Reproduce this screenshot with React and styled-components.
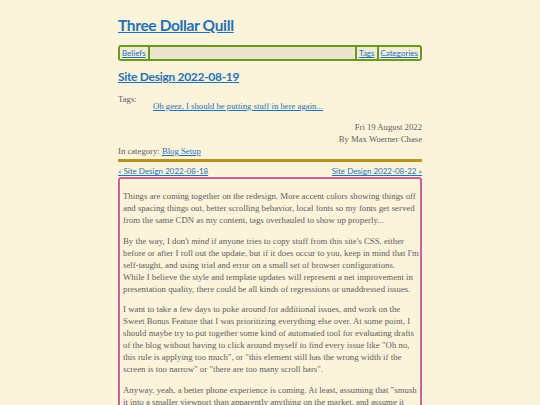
import React from "react";
import styled, { createGlobalStyle } from "styled-components";

const GlobalStyle = createGlobalStyle`
  html, body {
    margin: 0;
    padding: 0;
    background: #fcf3db;
  }
  body {
    font-family: "Liberation Serif", serif;
    color: #5e5e5e;
  }
`;

const Page = styled.div`
  width: 304px;
  margin: 0 auto;
  padding-top: 14px;
`;

const SiteTitle = styled.h1`
  margin: 0;
  font-family: "Lato", "Open Sans", sans-serif;
  font-weight: 700;
  font-size: 15.5px;
  letter-spacing: -0.35px;
  line-height: 22px;

  a {
    color: #1f72b8;
  }
`;

const Nav = styled.nav`
  margin-top: 9px;
  height: 12px;
  border: 2px solid #6a9a1c;
  border-radius: 3px;
  background: #ebe5d0;
  display: flex;
  align-items: stretch;
  font-family: "Lato", "Open Sans", sans-serif;
  font-size: 8px;
  line-height: 12px;
`;

const NavLink = styled.a`
  color: #1f72b8;
  padding: 0 2px;
  background: #f3ecd6;
`;

const NavBar = styled.span`
  width: 2px;
  background: #6a9a1c;
`;

const NavFill = styled.span`
  flex: 1;
`;

const PostTitle = styled.h2`
  margin: 8px 0 0;
  font-family: "Liberation Sans Narrow", "Lato", sans-serif;
  font-weight: 700;
  font-size: 12px;
  letter-spacing: -0.3px;
  line-height: 16px;

  a {
    color: #1f72b8;
  }
`;

const Small = styled.div`
  font-size: 8.7px;
  line-height: 12px;
  height: ${p => (p.$h ? `${p.$h}px` : "auto")};
  text-align: ${p => (p.$right ? "right" : "left")};
  padding-left: ${p => p.$indent || 0}px;
  margin-top: ${p => p.$top || 0}px;

  a {
    color: #1f72b8;
  }
`;

const Rule = styled.hr`
  margin: 2px 0 0;
  border: none;
  height: 3px;
  background: #bb9120;
`;

const PrevNext = styled.div`
  margin-top: 4px;
  display: flex;
  justify-content: space-between;
  font-family: "Lato", "Open Sans", sans-serif;
  font-size: 8px;
  line-height: 10px;

  a {
    color: #1f72b8;
  }
`;

const Article = styled.article`
  margin-top: 1px;
  border: 2px solid #c8619c;
  border-radius: 3px;
  padding: 11px 3px 6px;
`;

const Para = styled.p`
  margin: 0 0 8.7px;
  font-size: 8.8px;
  line-height: 12px;
  white-space: nowrap;
`;

export default function App() {
  return (
    <>
      <GlobalStyle />
      <Page>
        <SiteTitle>
          <a href="#">Three Dollar Quill</a>
        </SiteTitle>
        <Nav>
          <NavLink href="#">Beliefs</NavLink>
          <NavBar />
          <NavFill />
          <NavBar />
          <NavLink href="#">Tags</NavLink>
          <NavBar />
          <NavLink href="#">Categories</NavLink>
        </Nav>
        <PostTitle>
          <a href="#">Site Design 2022-08-19</a>
        </PostTitle>
        <Small $top={8} $h={7}>Tags:</Small>
        <Small $indent={35}>
          <a href="#">Oh geez, I should be putting stuff in here again...</a>
        </Small>
        <Small $right $top={9}>Fri 19 August 2022</Small>
        <Small $right>By Max Woerner Chase</Small>
        <Small>
          In category: <a href="#">Blog Setup</a>
        </Small>
        <Rule />
        <PrevNext>
          <a href="#">« Site Design 2022-08-18</a>
          <a href="#">Site Design 2022-08-22 »</a>
        </PrevNext>
        <Article>
          <Para>
            Things are coming together on the redesign. More accent colors showing things off<br />
            and spacing things out, better scrolling behavior, local fonts so my fonts get served<br />
            from the same CDN as my content, tags overhauled to show up properly...
          </Para>
          <Para>
            By the way, I don't <em>mind</em> if anyone tries to copy stuff from this site's CSS, either<br />
            before or after I roll out the update, but if it does occur to you, keep in mind that I'm<br />
            self-taught, and using trial and error on a small set of browser configurations.<br />
            While I believe the style and template updates will represent a net improvement in<br />
            presentation quality, there could be all kinds of regressions or unaddressed issues.
          </Para>
          <Para>
            I want to take a few days to poke around for additional issues, and work on the<br />
            Sweet Bonus Feature that I was prioritizing everything else over. At some point, I<br />
            should maybe try to put together some kind of automated tool for evaluating drafts<br />
            of the blog without having to click around myself to find every issue like "Oh no,<br />
            this rule is applying too much", or "this element still has the wrong width if the<br />
            screen is too narrow" or "there are too many scroll bars".
          </Para>
          <Para>
            Anyway, yeah, a better phone experience is coming. At least, assuming that "smush<br />
            it into a smaller viewport than apparently anything on the market, and assume it<br />
            works on actual phones" is a valid testing methodology.
          </Para>
        </Article>
      </Page>
    </>
  );
}
